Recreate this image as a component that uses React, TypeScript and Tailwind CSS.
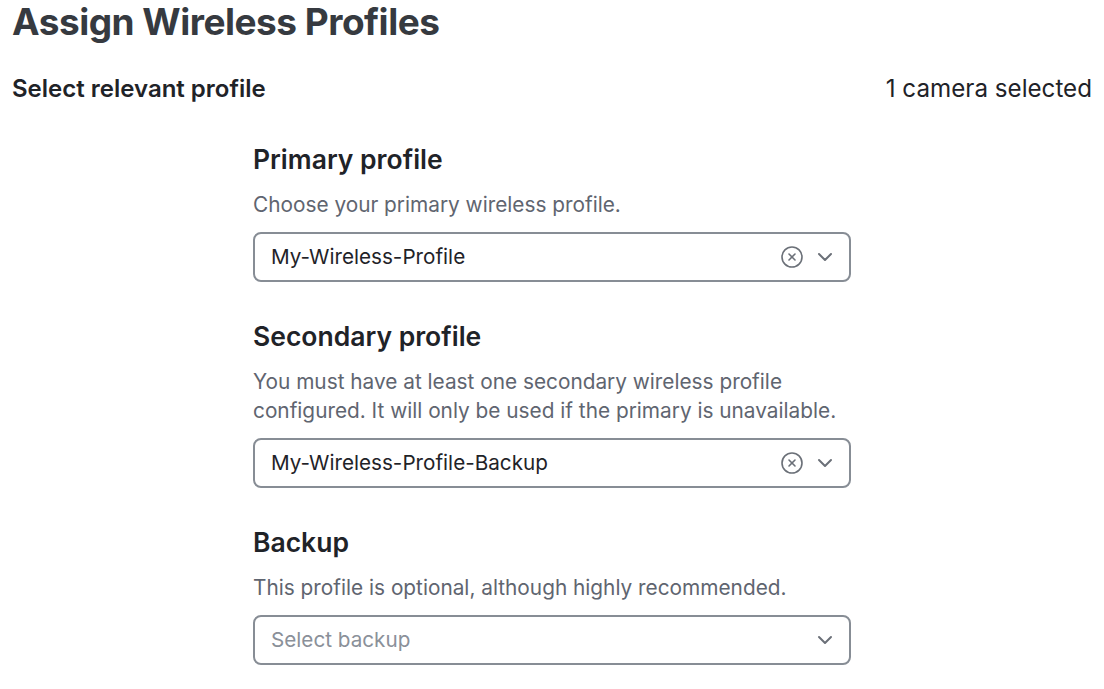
import { ChevronDown, CircleX } from "lucide-react";

type Field = {
  title: string;
  hint: string;
  value?: string;
  placeholder?: string;
};

const fields: Field[] = [
  {
    title: "Primary profile",
    hint: "Choose your primary wireless profile.",
    value: "My-Wireless-Profile",
  },
  {
    title: "Secondary profile",
    hint: "You must have at least one secondary wireless profile configured. It will only be used if the primary is unavailable.",
    value: "My-Wireless-Profile-Backup",
  },
  {
    title: "Backup",
    hint: "This profile is optional, although highly recommended.",
    placeholder: "Select backup",
  },
];

function ProfileSelect({ value, placeholder }: { value?: string; placeholder?: string }) {
  return (
    <div className="flex items-center h-[50px] border-2 border-[#878d95] rounded-lg pl-4 pr-3 bg-white">
      <span className={`flex-1 text-[20.7px] ${value ? "text-[#1f2328]" : "text-[#8a9099]"}`}>
        {value || placeholder}
      </span>
      {value && <CircleX className="w-6 h-6 text-[#6b7078] mr-[9px]" strokeWidth={1.6} />}
      <ChevronDown className="w-6 h-6 text-[#6b7078]" strokeWidth={2} />
    </div>
  );
}

export default function App() {
  return (
    <div className="min-h-screen bg-white px-3 font-['Inter',sans-serif]">
      <h1 className="text-[37px] leading-[44px] font-bold text-[#363a40] tracking-[-0.5px]">
        Assign Wireless Profiles
      </h1>

      <div className="flex items-center justify-between mt-[29px]">
        <h2 className="text-2xl leading-8 font-semibold text-[#1f2328]">Select relevant profile</h2>
        <span className="text-[24.2px] leading-8 text-[#1f2328]">1 camera selected</span>
      </div>

      <div className="w-[598px] ml-[241px] mt-[38px] flex flex-col gap-[38px]">
        {fields.map((field) => (
          <section key={field.title}>
            <h3 className="text-[26.5px] leading-8 font-semibold text-[#1f2328]">{field.title}</h3>
            <p className="mt-[15px] text-[20.8px] leading-[29px] text-[#5f6570]">{field.hint}</p>
            <div className="mt-[13px]">
              <ProfileSelect value={field.value} placeholder={field.placeholder} />
            </div>
          </section>
        ))}
      </div>
    </div>
  );
}
